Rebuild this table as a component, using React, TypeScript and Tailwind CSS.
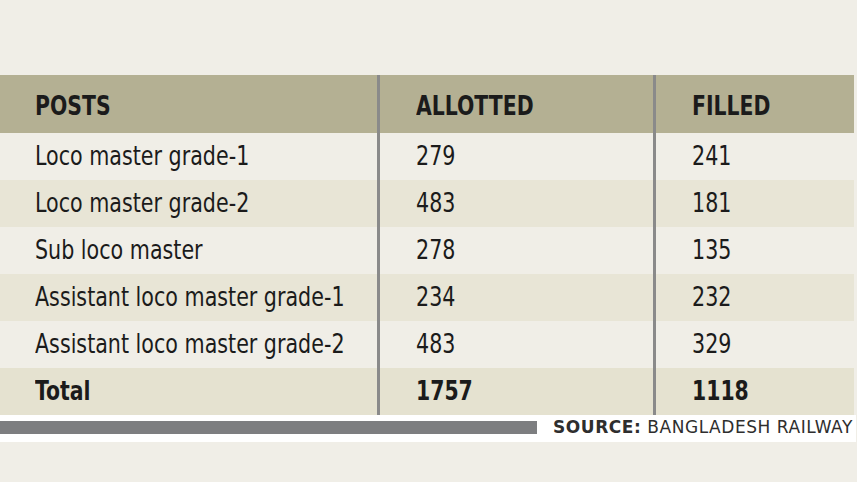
const rows = [
  { post: 'Loco master grade-1', allotted: '279', filled: '241', shade: 'bg-[#f0eee7]' },
  { post: 'Loco master grade-2', allotted: '483', filled: '181', shade: 'bg-[#e8e5d6]' },
  { post: 'Sub loco master', allotted: '278', filled: '135', shade: 'bg-[#f0eee7]' },
  { post: 'Assistant loco master grade-1', allotted: '234', filled: '232', shade: 'bg-[#e8e5d6]' },
  { post: 'Assistant loco master grade-2', allotted: '483', filled: '329', shade: 'bg-[#f0eee7]' },
];

const cond = "font-['Liberation_Sans_Narrow','DejaVu_Sans_Condensed','Roboto_Condensed',sans-serif]";

function Cell({ text, bold, width, pad }: { text: string; bold?: boolean; width: string; pad: string }) {
  return (
    <div className={`${width} ${pad} flex items-center whitespace-nowrap`}>
      <span className={`inline-block origin-left ${bold ? 'font-bold scale-x-[0.84]' : 'scale-x-[0.85]'}`}>{text}</span>
    </div>
  );
}

function Row({ cells, className, bold, head }: { cells: string[]; className: string; bold?: boolean; head?: boolean }) {
  const top = head ? 'pt-[4px]' : '';
  return (
    <div className={`flex ${className}`}>
      <Cell text={cells[0]} bold={bold} width="w-[377px]" pad={`pl-[35px] ${top}`} />
      <div className="w-[3px] bg-[#8a8a8a]" />
      <Cell text={cells[1]} bold={bold} width="w-[273px]" pad={`pl-[36px] ${top}`} />
      <div className="w-[3px] bg-[#8a8a8a]" />
      <Cell text={cells[2]} bold={bold} width="w-[198px]" pad={`pl-[36px] ${top}`} />
    </div>
  );
}

export default function App() {
  return (
    <div className="w-[857px] h-[482px] bg-[#f0eee7] pt-[75px] overflow-hidden">
      <div className={`w-[854px] text-[#1b1b1b] text-[27px] ${cond}`}>
        <Row cells={['POSTS', 'ALLOTTED', 'FILLED']} bold head className="h-[58px] bg-[#b4b093]" />
        {rows.map((r) => (
          <Row key={r.post} cells={[r.post, r.allotted, r.filled]} className={`h-[47px] ${r.shade}`} />
        ))}
        <Row cells={['Total', '1757', '1118']} bold className="h-[47px] bg-[#e5e2d0]" />
      </div>
      <div className="w-[856px] h-[27px] bg-white flex items-start pt-[6px]">
        <div className="w-[537px] h-[13px] bg-[#7d7e80]" />
        <div className="ml-[16px] -mt-[5px] text-[17px] leading-[22px] text-[#2e2e2e] font-['DejaVu_Sans',Verdana,sans-serif] tracking-[0.55px] whitespace-nowrap">
          <span className="font-bold">SOURCE:</span> BANGLADESH RAILWAY
        </div>
      </div>
    </div>
  );
}
